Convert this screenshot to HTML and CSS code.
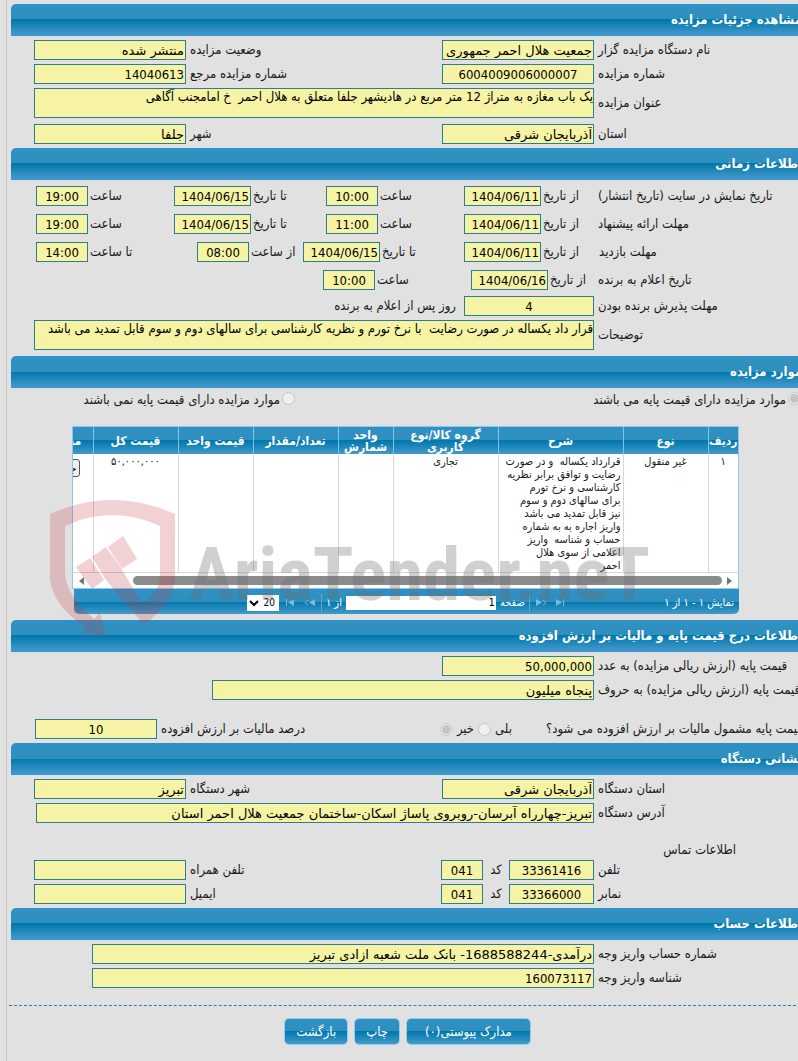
FILE: index.html
```
<!DOCTYPE html>
<html lang="fa" dir="rtl">
<head>
  <meta charset="UTF-8" />
  <meta name="viewport" content="width=device-width, initial-scale=1.0" />
  <title>مشاهده جزئیات مزایده</title>
  <link rel="stylesheet" href="styles.css">
</head>
<body>
  <main class="page">
    <!-- Tender details -->
    <section>
      <h2>مشاهده جزئیات مزایده</h2>
      <div class="rows">
        <div class="row">
          <label for="org">نام دستگاه مزایده گزار</label>
          <input id="org" type="text" value="جمعیت هلال احمر جمهوری اسلامی" readonly>
          <label for="status">وضعیت مزایده</label>
          <input id="status" type="text" value="منتشر شده" readonly>
        </div>
        <div class="row">
          <label for="number">شماره مزایده</label>
          <input id="number" class="num center" type="text" value="6004009006000007" readonly>
          <label for="ref">شماره مزایده مرجع</label>
          <input id="ref" class="num" type="text" value="14040613" readonly>
        </div>
        <div class="row tall">
          <label for="subject">عنوان مزایده</label>
          <textarea id="subject" class="wide" readonly>یک باب مغازه به متراژ 12 متر مربع در هادیشهر جلفا متعلق به هلال احمر  خ امامجنب آگاهی</textarea>
        </div>
        <div class="row">
          <label for="province">استان</label>
          <input id="province" type="text" value="آذربایجان شرقی" readonly>
          <label for="city">شهر</label>
          <input id="city" type="text" value="جلفا" readonly>
        </div>
      </div>
    </section>

    <!-- Dates -->
    <section>
      <h2>اطلاعات زمانی</h2>
      <div class="rows dates">
        <div class="row times">
          <span>تاریخ نمایش در سایت (تاریخ انتشار)</span>
          <label for="show-from">از تاریخ</label>
          <input id="show-from" class="num" type="text" value="1404/06/11" readonly>
          <label for="show-from-time">ساعت</label>
          <input id="show-from-time" class="num center" type="text" value="10:00" readonly>
          <label for="show-to">تا تاریخ</label>
          <input id="show-to" class="num" type="text" value="1404/06/15" readonly>
          <label for="show-to-time">ساعت</label>
          <input id="show-to-time" class="num center" type="text" value="19:00" readonly>
        </div>
        <div class="row times">
          <span>مهلت ارائه پیشنهاد</span>
          <label for="offer-from">از تاریخ</label>
          <input id="offer-from" class="num" type="text" value="1404/06/11" readonly>
          <label for="offer-from-time">ساعت</label>
          <input id="offer-from-time" class="num center" type="text" value="11:00" readonly>
          <label for="offer-to">تا تاریخ</label>
          <input id="offer-to" class="num" type="text" value="1404/06/15" readonly>
          <label for="offer-to-time">ساعت</label>
          <input id="offer-to-time" class="num center" type="text" value="19:00" readonly>
        </div>
        <div class="row times visit">
          <span>مهلت بازدید</span>
          <label for="visit-from">از تاریخ</label>
          <input id="visit-from" class="num" type="text" value="1404/06/11" readonly>
          <label for="visit-to">تا تاریخ</label>
          <input id="visit-to" class="num" type="text" value="1404/06/15" readonly>
          <label for="visit-from-time">از ساعت</label>
          <input id="visit-from-time" class="num center" type="text" value="08:00" readonly>
          <label for="visit-to-time">تا ساعت</label>
          <input id="visit-to-time" class="num center" type="text" value="14:00" readonly>
        </div>
        <div class="row times winner">
          <span>تاریخ اعلام به برنده</span>
          <label for="winner-date">از تاریخ</label>
          <input id="winner-date" class="num" type="text" value="1404/06/16" readonly>
          <label for="winner-time">ساعت</label>
          <input id="winner-time" class="num center" type="text" value="10:00" readonly>
        </div>
      </div>
      <div class="rows after-dates">
        <div class="row accept">
          <label for="accept-days">مهلت پذیرش برنده بودن</label>
          <input id="accept-days" class="num center" type="text" value="4" readonly>
          <span>روز پس از اعلام به برنده</span>
        </div>
        <div class="row tall">
          <label for="notes">توضیحات</label>
          <textarea id="notes" class="wide" readonly>قرار داد یکساله در صورت رضایت  با نرخ تورم و نظریه کارشناسی برای سالهای دوم و سوم قابل تمدید می باشد</textarea>
        </div>
      </div>
    </section>

    <!-- Items -->
    <section>
      <h2>موارد مزایده</h2>
      <div class="base-price">
        <label><input type="radio" name="base" checked disabled>موارد مزایده دارای قیمت پایه می باشند</label>
        <label><input type="radio" name="base" disabled>موارد مزایده دارای قیمت پایه نمی باشند</label>
      </div>
      <div class="items">
        <div class="grid-view">
          <table>
            <colgroup>
              <col class="c-row"><col class="c-type"><col class="c-desc"><col class="c-group"><col class="c-unit">
              <col class="c-count"><col class="c-price"><col class="c-total"><col class="c-docs">
            </colgroup>
            <thead>
              <tr>
                <th>ردیف</th><th>نوع</th><th>شرح</th><th>گروه کالا/نوع کاربری</th><th>واحد شمارش</th>
                <th>تعداد/مقدار</th><th>قیمت واحد</th><th>قیمت کل</th><th>مستندات</th>
              </tr>
            </thead>
            <tbody>
              <tr>
                <td>۱</td>
                <td>غیر منقول</td>
                <td class="desc">قرارداد یکساله&nbsp; و در صورت<br>رضایت و توافق برابر نظریه<br>کارشناسی و نرخ تورم<br>برای سالهای دوم و سوم<br>نیز قابل تمدید می باشد<br>واریز اجاره به به شماره<br>حساب و شناسه&nbsp; واریز<br>اعلامی از سوی هلال<br>احمر</td>
                <td>تجاری</td>
                <td></td>
                <td></td>
                <td></td>
                <td>۵۰,۰۰۰,۰۰۰</td>
                <td class="files"><button type="button" class="small">جزئیات</button></td>
              </tr>
            </tbody>
          </table>
        </div>
        <div class="scrollbar">
          <svg width="6" height="10" viewBox="0 0 6 10"><path d="M0 1l5 4-5 4z" fill="#777"/></svg>
          <span class="thumb"></span>
          <svg width="6" height="10" viewBox="0 0 6 10"><path d="M6 1L1 5l5 4z" fill="#777"/></svg>
        </div>
        <div class="pager">
          <span class="info">نمایش ۱ - ۱ از ۱</span>
          <svg width="10" height="7" viewBox="0 0 10 7" fill="#7fb9d9"><path d="M0 0l6 3.500-6 3.500zM7 0h1v7H7z"/></svg>
          <svg width="12" height="7" viewBox="0 0 12 7"><path d="M0 0l6 3.500-6 3.500z" fill="#7fb9d9"/><path d="M7 1l3 2.500L7 6" fill="none" stroke="#7fb9d9"/></svg>
          <i class="sep"></i>
          <label for="page-no">صفحه</label>
          <input id="page-no" type="text" value="1">
          <span>از ۱</span>
          <i class="sep"></i>
          <svg width="12" height="7" viewBox="0 0 12 7"><path d="M12 0L6 3.500 12 7z" fill="#7fb9d9"/><path d="M5 1L2 3.500 5 6" fill="none" stroke="#7fb9d9"/></svg>
          <svg width="10" height="7" viewBox="0 0 10 7" fill="#7fb9d9"><path d="M9 0L3 3.500 9 7zM1 0h1v7H1z"/></svg>
          <select aria-label="تعداد در صفحه"><option>20</option></select>
        </div>
        <svg class="watermark" width="620" height="150" viewBox="0 0 620 150" direction="ltr">
          <path fill="#c83746" fill-opacity="0.23" d="M10 24Q72-4 135 24V88Q134 112 104 135L93 121Q120 105 120 86V36Q72 14 25 36V85Q27 106 54 129L60 123 66 146 41 143 46 138Q12 115 10 88ZM52 67L66 57 81 78 104 117 112 127 104 135 66 90ZM36 77L50 68 64 90 52 99ZM68 57L83 46 97 69 82 79Z"/>
          <text x="149" y="110" fill="#6e6e6e" fill-opacity="0.32">AriaTender.neT</text>
        </svg>
      </div>
    </section>

    <!-- Base price and VAT -->
    <section>
      <h2>اطلاعات درج قیمت پایه و مالیات بر ارزش افزوده</h2>
      <div class="rows">
        <div class="row">
          <label for="amount">قیمت پایه (ارزش ریالی مزایده) به عدد</label>
          <input id="amount" class="num" type="text" value="50,000,000" readonly>
        </div>
        <div class="row">
          <label for="words">قیمت پایه (ارزش ریالی مزایده) به حروف</label>
          <input id="words" class="wide words" type="text" value="پنجاه میلیون" readonly>
        </div>
      </div>
      <div class="vat">
        <span class="question">قیمت پایه مشمول مالیات بر ارزش افزوده می شود؟</span>
        <label for="vat-yes" class="yes">بلی</label>
        <input id="vat-yes" type="radio" name="vat" disabled>
        <label for="vat-no">خیر</label>
        <input id="vat-no" type="radio" name="vat" checked disabled>
        <label for="vat-rate" class="rate">درصد مالیات بر ارزش افزوده</label>
        <input id="vat-rate" class="num center" type="text" value="10" readonly>
      </div>
    </section>

    <!-- Address -->
    <section>
      <h2>نشانی دستگاه</h2>
      <div class="rows">
        <div class="row">
          <label for="org-province">استان دستگاه</label>
          <input id="org-province" type="text" value="آذربایجان شرقی" readonly>
          <label for="org-city">شهر دستگاه</label>
          <input id="org-city" type="text" value="تبریز" readonly>
        </div>
        <div class="row">
          <label for="address">آدرس دستگاه</label>
          <input id="address" class="wide address" type="text" value="تبریز-چهارراه آبرسان-روبروی پاساژ اسکان-ساختمان جمعیت هلال احمر استان" readonly>
        </div>
      </div>
      <h3>اطلاعات تماس</h3>
      <div class="rows contact">
        <div class="row">
          <label for="phone">تلفن</label>
          <div class="phone">
            <input id="phone" class="num center" type="text" value="33361416" readonly>
            <label for="phone-code">کد</label>
            <input id="phone-code" class="num center code" type="text" value="041" readonly>
          </div>
          <label for="mobile">تلفن همراه</label>
          <input id="mobile" type="text" readonly>
        </div>
        <div class="row">
          <label for="fax">نمابر</label>
          <div class="phone">
            <input id="fax" class="num center" type="text" value="33366000" readonly>
            <label for="fax-code">کد</label>
            <input id="fax-code" class="num center code" type="text" value="041" readonly>
          </div>
          <label for="email">ایمیل</label>
          <input id="email" type="text" readonly>
        </div>
      </div>
    </section>

    <!-- Account -->
    <section>
      <h2>اطلاعات حساب</h2>
      <div class="rows">
        <div class="row">
          <label for="account">شماره حساب واریز وجه</label>
          <input id="account" class="wide account" type="text" value="درآمدی-1688588244- بانک ملت شعبه ازادی تبریز" readonly>
        </div>
        <div class="row">
          <label for="deposit">شناسه واریز وجه</label>
          <input id="deposit" class="wide account num" type="text" value="160073117" readonly>
        </div>
      </div>
    </section>

    <div class="buttons">
      <button type="button" class="docs">مدارک پیوستی(۰)</button>
      <button type="button">چاپ</button>
      <button type="button">بازگشت</button>
    </div>
  </main>
</body>
</html>
```
FILE: styles.css
```
* {
  box-sizing: border-box;
}
body {
  margin: 0;
  padding-left: 6px;
  overflow-x: hidden;
  background-color: #e1e1e1;
  color: #1a1a1a;
  font-family: "DejaVu Sans Condensed", "DejaVu Sans", sans-serif;
  font-size: 13px;
  line-height: 16px;
}
.page {
  min-height: 100vh;
  margin-right: -8px;
  padding: 4px 0 16px 4px;
  border-left: 1px solid #c8c8c8;
}
h2 {
  height: 32px;
  margin: 0;
  padding: 0 4px;
  border-bottom: 1px solid #3a96d2;
  border-radius: 5px 5px 0 0;
  background: linear-gradient(#3090c4, #2e90bd 50%, #0077ad 50%, #449aca);
  box-shadow: 0 0 2px #bfe3f7;
  color: #fff;
  font-size: 13px;
  line-height: 32px;
}
h3 {
  margin: 0;
  padding: 15px 70px 2px 0;
  font-size: 13px;
  font-weight: normal;
}

/* Form rows */
.rows {
  display: grid;
  gap: 4px;
  padding: 4px 0 4px 23px;
}
.row {
  display: grid;
  grid-template-columns: 1fr 152px 248px 152px;
  column-gap: 4px;
  align-items: center;
}
.row > span,
.row label {
  text-align: left;
  white-space: nowrap;
}
input,
textarea {
  width: 100%;
  min-width: 0;
  height: 20px;
  margin: 0;
  padding: 0 1px;
  border: 1px solid #2b7e8c;
  border-radius: 0;
  background-color: #f6f4a4;
  color: #000;
  font-family: "DejaVu Sans", sans-serif;
  font-size: 13px;
}
textarea {
  display: block;
  height: 30px;
  padding: 0;
  font-family: "DejaVu Sans Condensed", "DejaVu Sans", sans-serif;
  line-height: 16px;
  resize: none;
  overflow: hidden;
}
.num {
  font-family: "DejaVu Sans Condensed", "DejaVu Sans", sans-serif;
}
.center {
  text-align: center;
}
.wide {
  grid-column: 2 / -1;
}
.tall {
  padding-bottom: 2px;
}

/* Dates */
.dates {
  row-gap: 8px;
  padding: 6px 0 0 25px;
}
.times {
  grid-template-columns: 1fr 53px 77px 82px 52px 71px 77px 82px 52px;
  column-gap: 2px;
}
.visit {
  grid-template-columns: 1fr 54px 77px 80px 77px 50px 52px 105px 52px;
}
.winner {
  grid-template-columns: 1fr 46px 77px 92px 52px 285px;
}
.after-dates {
  padding-top: 6px;
}
.accept {
  grid-template-columns: 1fr 130px 426px;
}
.row.accept > span {
  padding-right: 4px;
  text-align: right;
}

/* Radios */
input[type="radio"] {
  flex: none;
  width: 13px;
  height: 13px;
  appearance: none;
  border: 1px solid #c6c6c6;
  border-radius: 50%;
  background-color: #efefef;
}
input[type="radio"]:checked {
  background: radial-gradient(circle, #c4c4c4 4px, #efefef 5px);
}
.base-price {
  display: grid;
  grid-template-columns: 1fr 300px;
  padding: 4px 5px 4px 0;
}
.base-price label {
  display: flex;
  gap: 2px;
}
.base-price label + label {
  padding-right: 16px;
}

/* Items grid */
.items {
  position: relative;
  margin: 14px 67px 6px 61px;
  font-size: 11px;
}
.grid-view {
  overflow: hidden;
  border: 1px solid #8cc8ee;
  border-bottom: 0;
  background-color: #fff;
}
table {
  width: 716px;
  border-collapse: collapse;
  table-layout: fixed;
}
.c-row { width: 30px; }
.c-type { width: 85px; }
.c-desc { width: 125px; }
.c-group { width: 105px; }
.c-unit { width: 55px; }
.c-count { width: 85px; }
.c-price { width: 75px; }
.c-total { width: 85px; }
.c-docs { width: 71px; }
th {
  height: 27px;
  padding: 0;
  border-left: 1px solid #7cc4ee;
  background: linear-gradient(#3090c4, #2e90bd 50%, #0077ad 50%, #449aca);
  color: #fff;
  font-size: 12px;
  line-height: 12px;
}
td {
  height: 116px;
  padding: 1px 2px 0;
  border-left: 1px solid #d6d6d6;
  line-height: 13px;
  text-align: center;
  vertical-align: top;
}
.desc {
  text-align: right;
  white-space: nowrap;
}
.files {
  padding-right: 13px;
  text-align: right;
}
.small {
  height: 18px;
  margin-top: 4px;
  padding: 0 2px;
  border: 1px solid #555;
  border-radius: 3px;
  background: #efefef;
  color: #000;
  font-family: "DejaVu Sans", sans-serif;
  font-size: 11px;
}
.scrollbar {
  display: flex;
  align-items: center;
  height: 17px;
  padding: 0 5px;
  border: 1px solid #8cc8ee;
  border-top-color: #d6d6d6;
  background-color: #fdfdfd;
}
.thumb {
  flex: 1;
  height: 9px;
  margin: 0 5px 0 49px;
  border-radius: 5px;
  background-color: #8b8b8b;
}
.pager {
  display: flex;
  align-items: center;
  gap: 4px;
  height: 25px;
  margin-left: 2px;
  padding: 2px 5px 0;
  border-radius: 0 0 5px 5px;
  background: linear-gradient(#3090c4, #2e90bd 50%, #0077ad 50%, #449aca);
  color: #fff;
}
.pager svg {
  margin: 0 2px;
}
.pager .info {
  width: 162px;
}
.sep {
  width: 1px;
  height: 18px;
  background-color: #5aa9d2;
}
.pager input {
  width: 150px;
  height: 14px;
  border: 0;
  background-color: #fff;
  font-size: 10px;
}
.pager select {
  width: 32px;
  height: 16px;
  padding: 0;
  border: 0;
  background-color: #fff;
  color: #000;
  font-family: "DejaVu Sans Condensed", sans-serif;
  font-size: 10px;
}
.watermark {
  position: absolute;
  top: 64px;
  left: -32px;
  pointer-events: none;
}
.watermark text {
  font-family: "Roboto Condensed", Roboto, sans-serif;
  font-size: 75px;
  font-weight: bold;
}

/* VAT */
.words {
  width: 382px;
}
.vat {
  display: flex;
  align-items: center;
  gap: 4px;
  padding: 15px 3px 4px 24px;
}
.vat .yes {
  margin-right: 30px;
}
.vat .rate {
  margin-right: auto;
}
.vat .num {
  width: 122px;
}

/* Address and account */
.address {
  width: 558px;
}
.contact {
  padding-top: 0;
}
.phone {
  display: flex;
  align-items: center;
  justify-content: space-between;
  margin-left: -1px;
}
.phone input {
  width: 85px;
}
.phone .code {
  width: 42px;
}
.account {
  width: 502px;
}

/* Footer buttons */
.buttons {
  display: flex;
  justify-content: center;
  gap: 6px;
  margin: 13px 0 0 -2px;
  padding-top: 12px;
  border-top: 1px dashed #2b7fa5;
}
.buttons button {
  height: 27px;
  padding: 0 11px;
  border: 1px solid #8fd0f0;
  border-radius: 5px;
  background: linear-gradient(#3090c4, #2e90bd 50%, #0077ad 50%, #449aca);
  color: #fff;
  font-family: "DejaVu Sans Condensed", "DejaVu Sans", sans-serif;
  font-size: 13px;
}
.buttons .docs {
  padding: 0 18px;
}
```
